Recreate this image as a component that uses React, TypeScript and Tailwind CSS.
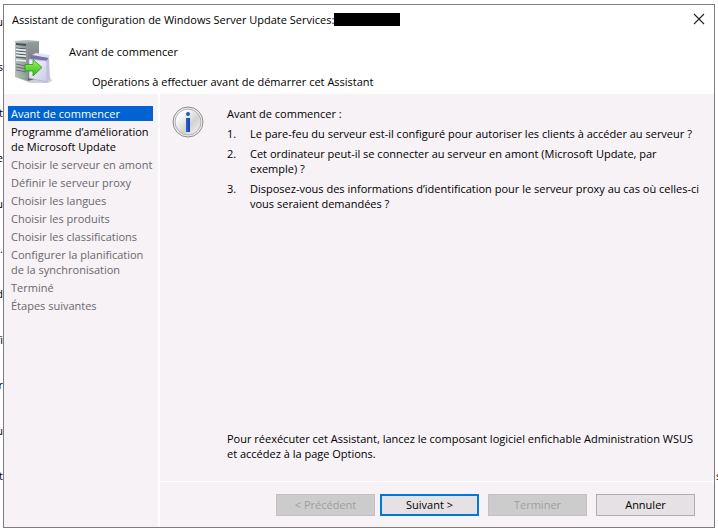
import type { ReactNode } from "react"

const steps = [
    { label: ["Avant de commencer"], state: "active" },
    { label: ["Programme d’amélioration", "de Microsoft Update"], state: "enabled" },
    { label: ["Choisir le serveur en amont"], state: "pending" },
    { label: ["Définir le serveur proxy"], state: "pending" },
    { label: ["Choisir les langues"], state: "pending" },
    { label: ["Choisir les produits"], state: "pending" },
    { label: ["Choisir les classifications"], state: "pending" },
    { label: ["Configurer la planification", "de la synchronisation"], state: "pending" },
    { label: ["Terminé"], state: "pending" },
    { label: ["Étapes suivantes"], state: "pending" },
]

const stepStyles: Record<string, string> = {
    active: "bg-[#0063d1] text-white",
    enabled: "text-black",
    pending: "text-[#6b686b]",
}

const questions = [
    ["Le pare-feu du serveur est-il configuré pour autoriser les clients à accéder au serveur ?"],
    ["Cet ordinateur peut-il se connecter au serveur en amont (Microsoft Update, par", "exemple) ?"],
    ["Disposez-vous des informations d’identification pour le serveur proxy au cas où celles-ci", "vous seraient demandées ?"],
]

// ends of the lines of the document lying under the dialog
const documentLines = ["u", "s", "t", "e", "u", ".", "d", "fi", "r", "u", "et"]

function Lines({ lines }: { lines: string[] }) {
    return (
        <>
            {lines.map((line) => (
                <span key={line} className="block whitespace-nowrap">{line}</span>
            ))}
        </>
    )
}

function ServerIcon() {
    return (
        <svg className="w-10 h-11 shrink-0" viewBox="0 0 40 44" aria-hidden="true">
            <defs>
                <linearGradient id="tower" x1="0" x2="1">
                    <stop offset="0" stopColor="#b9c0bf" />
                    <stop offset="1" stopColor="#8b9493" />
                </linearGradient>
                <linearGradient id="side" x1="0" x2="0" y1="0" y2="1">
                    <stop offset="0" stopColor="#969e9d" />
                    <stop offset="1" stopColor="#5b6464" />
                </linearGradient>
                <linearGradient id="box" x1="0" x2="1" y2="1">
                    <stop offset="0" stopColor="#fafaff" />
                    <stop offset="1" stopColor="#c9c9e6" />
                </linearGradient>
                <linearGradient id="arrow" x1="0" x2="0" y1="0" y2="1">
                    <stop offset="0" stopColor="#a6f25c" />
                    <stop offset="1" stopColor="#2fb81c" />
                </linearGradient>
            </defs>
            <path d="M4 38 L16 43 L34 43 L38 41 L36 37Z" fill="#cfcfd8" />
            <path d="M1 1 L14 2 L14 41 L1 37Z" fill="url(#tower)" />
            <path d="M1 1 L13 0 L25 1 L14 3Z" fill="#b3baba" />
            <path d="M14 2 L25 1 L25 38 L14 41Z" fill="url(#side)" />
            <path d="M2 3 L12 4 V6 L2 5Z" fill="#43525a" />
            <path d="M2 8 L12 9 M2 11 L12 12 M2 14 L12 15 M2 17 L12 18" stroke="#4b585c" />
            <path d="M2 9.3 L12 10.3 M2 12.3 L12 13.3 M2 15.3 L12 16.3 M2 20 L12 21" stroke="#eaf2f4" strokeWidth="1.5" />
            <path d="M2 24 L12 26 M2 27 L12 29 M2 30 L12 32" stroke="#667073" />
            <circle cx="10" cy="36" r="1.3" fill="#5ee04c" />
            <path d="M15 19 L18 15 L35 17 L33 21Z" fill="#7673aa" />
            <path d="M18 15 L22 13 L36 15 L35 18Z" fill="#e1e0f4" />
            <path d="M15 19 L33 21 V42 L15 38Z" fill="url(#box)" stroke="#b0afd0" strokeWidth="0.8" />
            <path d="M33 21 L35 17 L36 38 L33 42Z" fill="#c3c2de" />
            <path d="M11 24.5 H19 V19.5 L28 27.5 L19 36 V31 H11Z" fill="url(#arrow)" stroke="#2a971b" strokeWidth="0.8" />
        </svg>
    )
}

function InfoIcon() {
    return (
        <svg className="w-8 h-8 shrink-0" viewBox="0 0 32 32" aria-hidden="true">
            <defs>
                <linearGradient id="disc" x1="0" x2="1" y1="0" y2="1">
                    <stop offset="0.2" stopColor="#ffffff" />
                    <stop offset="0.6" stopColor="#d2d2d2" />
                    <stop offset="1" stopColor="#fafafa" />
                </linearGradient>
                <linearGradient id="stem" x1="0" x2="1">
                    <stop offset="0" stopColor="#2a63cf" />
                    <stop offset="1" stopColor="#1742a2" />
                </linearGradient>
            </defs>
            <circle cx="16" cy="16" r="15" fill="#f2f2f2" stroke="#8d8b8d" />
            <circle cx="16" cy="16" r="13" fill="url(#disc)" stroke="#b0afb0" />
            <circle cx="16" cy="8" r="2" fill="#2459c4" />
            <rect x="14" y="12" width="4" height="14" fill="url(#stem)" />
        </svg>
    )
}

function WizardButton({ children, disabled, primary }: { children: ReactNode; disabled?: boolean; primary?: boolean }) {
    const look = disabled
        ? "border border-[#c2c0c2] bg-[#cccccc] text-[#a09ea0]"
        : primary
            ? "border-2 border-[#0078d7] bg-[#e5e1e5] text-black"
            : "border border-[#aeacae] bg-[#e5e1e5] text-black"
    return (
        <button type="button" disabled={disabled} className={`w-[99px] h-[22px] flex items-center justify-center ${look}`}>
            {children}
        </button>
    )
}

export default function App() {
    return (
        <div className="relative min-h-screen overflow-hidden bg-white flex pt-1 pb-[3px] px-[3px] font-['Open_Sans',sans-serif] text-[11px] leading-[15px] text-black">
            <div aria-hidden="true" className="absolute inset-y-0 left-0 w-[3px] pt-[14px] pb-[48px] flex flex-col justify-between items-end">
                {documentLines.map((text, i) => (
                    <span key={i}>{text}</span>
                ))}
            </div>
            <div aria-hidden="true" className="absolute bottom-[48px] right-0 w-[2px]">s</div>

            <div role="dialog" aria-labelledby="dialog-title" className="relative flex-1 min-w-0 flex flex-col border border-[#7f7b7f] bg-white">
                <div className="flex items-center justify-between pl-2 pr-[9px] h-7">
                    <h1 id="dialog-title" className="flex items-center">
                        Assistant de configuration de Windows Server Update Services:
                        <span className="w-[66px] h-[13px] bg-black" />
                    </h1>
                    <button type="button" aria-label="Fermer">
                        <svg className="w-3 h-3" viewBox="0 0 12 12" stroke="#222222" strokeWidth="1.1">
                            <path d="M1 1 L11 11 M11 1 L1 11" />
                        </svg>
                    </button>
                </div>

                <header className="flex h-[61px] pl-[10px] pt-[7px] gap-[15px]">
                    <ServerIcon />
                    <div className="flex flex-col gap-[15px] pt-1">
                        <h2>Avant de commencer</h2>
                        <p className="pl-[23px]">Opérations à effectuer avant de démarrer cet Assistant</p>
                    </div>
                </header>

                <div className="flex-1 flex bg-[#f6f2f6]">
                    <nav className="w-[156px] shrink-0 border-r-2 border-white pt-3 pl-1 pr-[5px]">
                        <ol className="flex flex-col gap-[3px]">
                            {steps.map((step) => (
                                <li key={step.label[0]} className={`pl-[3px] ${stepStyles[step.state]}`}>
                                    <Lines lines={step.label} />
                                </li>
                            ))}
                        </ol>
                    </nav>

                    <div className="flex-1 min-w-0 flex flex-col">
                        <main className="flex-1 flex gap-[23px] pl-3 pt-3 pr-1 pb-5">
                            <InfoIcon />
                            <div className="flex-1 min-w-0 flex flex-col">
                                <p>Avant de commencer :</p>
                                <ol className="mt-[5px] flex flex-col gap-[5px]">
                                    {questions.map((question, i) => (
                                        <li key={i} className="flex">
                                            <span className="w-[23px] shrink-0">{i + 1}.</span>
                                            <div>
                                                <Lines lines={question} />
                                            </div>
                                        </li>
                                    ))}
                                </ol>
                                <p className="mt-auto">
                                    Pour réexécuter cet Assistant, lancez le composant logiciel enfichable Administration WSUS
                                    <br />
                                    et accédez à la page Options.
                                </p>
                            </div>
                        </main>

                        <footer className="h-[46px] border-t border-white flex items-center justify-end pr-[19px]">
                            <div className="flex gap-[5px] mr-[9px]">
                                <WizardButton disabled>&lt; Précédent</WizardButton>
                                <WizardButton primary>Suivant &gt;</WizardButton>
                            </div>
                            <div className="flex gap-[9px]">
                                <WizardButton disabled>Terminer</WizardButton>
                                <WizardButton>Annuler</WizardButton>
                            </div>
                        </footer>
                    </div>
                </div>
            </div>
        </div>
    )
}
